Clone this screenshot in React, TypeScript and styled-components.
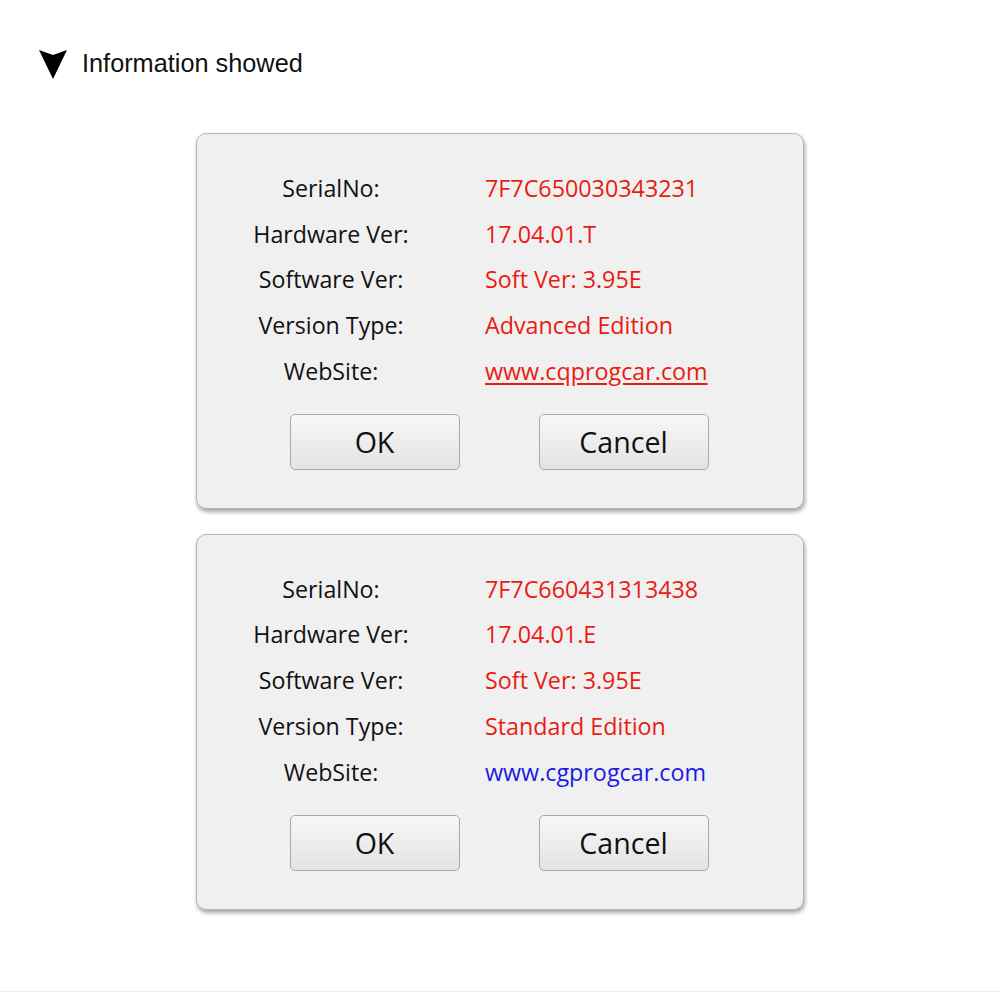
import styled, { createGlobalStyle } from 'styled-components';

const GlobalStyle = createGlobalStyle`
  html, body {
    margin: 0;
    padding: 0;
    background: #ffffff;
  }
  body {
    font-family: "Open Sans", "Noto Sans", sans-serif;
  }
`;

const Page = styled.div`
  width: 1000px;
  height: 992px;
  box-sizing: border-box;
  border-bottom: 1px solid #ececec;
  padding-top: 47px;
`;

const Header = styled.div`
  display: flex;
  align-items: center;
  gap: 14px;
  padding-left: 38px;
  height: 32px;
`;

const Title = styled.h1`
  margin: 0;
  font-family: "Liberation Sans", Arial, sans-serif;
  font-weight: normal;
  font-size: 25.3px;
  color: #111;
`;

const Panels = styled.div`
  display: flex;
  flex-direction: column;
  align-items: center;
  gap: 25px;
  margin-top: 54px;
`;

const Panel = styled.div`
  width: 608px;
  box-sizing: border-box;
  background: #f0f0f0;
  border: 1px solid #b4b4b4;
  border-radius: 10px;
  box-shadow: 1px 3px 4px rgba(0, 0, 0, 0.35);
  padding: 31px 0 38px;
`;

const Grid = styled.div`
  display: grid;
  grid-template-columns: 268px 1fr;
  column-gap: 20px;
  grid-auto-rows: 45.75px;
  align-items: center;
`;

const Label = styled.div`
  text-align: center;
  font-size: 23.2px;
  color: #111;
`;

const Value = styled.div<{ $tone?: 'red' | 'blue' }>`
  font-size: 23.3px;
  color: ${(p) => (p.$tone === 'blue' ? '#1c1ce0' : '#ea1c12')};
`;

const Link = styled.a<{ $tone?: 'red' | 'blue' }>`
  color: ${(p) => (p.$tone === 'blue' ? '#1c1ce0' : '#ea1c12')};
  text-decoration: ${(p) => (p.$tone === 'blue' ? 'none' : 'underline')};
  text-underline-offset: 3px;
`;

const Buttons = styled.div`
  display: flex;
  justify-content: center;
  gap: 79px;
  margin-top: 20px;
  padding-right: 2px;
`;

const Button = styled.button`
  width: 170px;
  height: 56px;
  box-sizing: border-box;
  border: 1px solid #a9a9a9;
  border-radius: 5px;
  background: linear-gradient(#f7f7f7, #e3e3e3);
  font-family: "Open Sans", "Noto Sans", sans-serif;
  font-size: 28.6px;
  color: #111;
  padding: 0;
`;

const Arrow = () => (
  <svg width="30" height="31" viewBox="0 0 30 31">
    <polygon points="1,2 15,7 29,2 15,31" fill="#000" />
  </svg>
);

type Info = {
  serial: string;
  hardware: string;
  software: string;
  edition: string;
  site: string;
  siteTone: 'red' | 'blue';
};

const panels: Info[] = [
  {
    serial: '7F7C650030343231',
    hardware: '17.04.01.T',
    software: 'Soft Ver: 3.95E',
    edition: 'Advanced Edition',
    site: 'www.cqprogcar.com',
    siteTone: 'red',
  },
  {
    serial: '7F7C660431313438',
    hardware: '17.04.01.E',
    software: 'Soft Ver: 3.95E',
    edition: 'Standard Edition',
    site: 'www.cgprogcar.com',
    siteTone: 'blue',
  },
];

const InfoPanel = ({ info }: { info: Info }) => (
  <Panel>
    <Grid>
      <Label>SerialNo:</Label>
      <Value>{info.serial}</Value>
      <Label>Hardware Ver:</Label>
      <Value>{info.hardware}</Value>
      <Label>Software Ver:</Label>
      <Value>{info.software}</Value>
      <Label>Version Type:</Label>
      <Value>{info.edition}</Value>
      <Label>WebSite:</Label>
      <Value $tone={info.siteTone}>
        <Link $tone={info.siteTone}>{info.site}</Link>
      </Value>
    </Grid>
    <Buttons>
      <Button>OK</Button>
      <Button>Cancel</Button>
    </Buttons>
  </Panel>
);

const App = () => (
  <Page>
    <GlobalStyle />
    <Header>
      <Arrow />
      <Title>Information showed</Title>
    </Header>
    <Panels>
      {panels.map((p) => (
        <InfoPanel key={p.serial} info={p} />
      ))}
    </Panels>
  </Page>
);

export default App;
